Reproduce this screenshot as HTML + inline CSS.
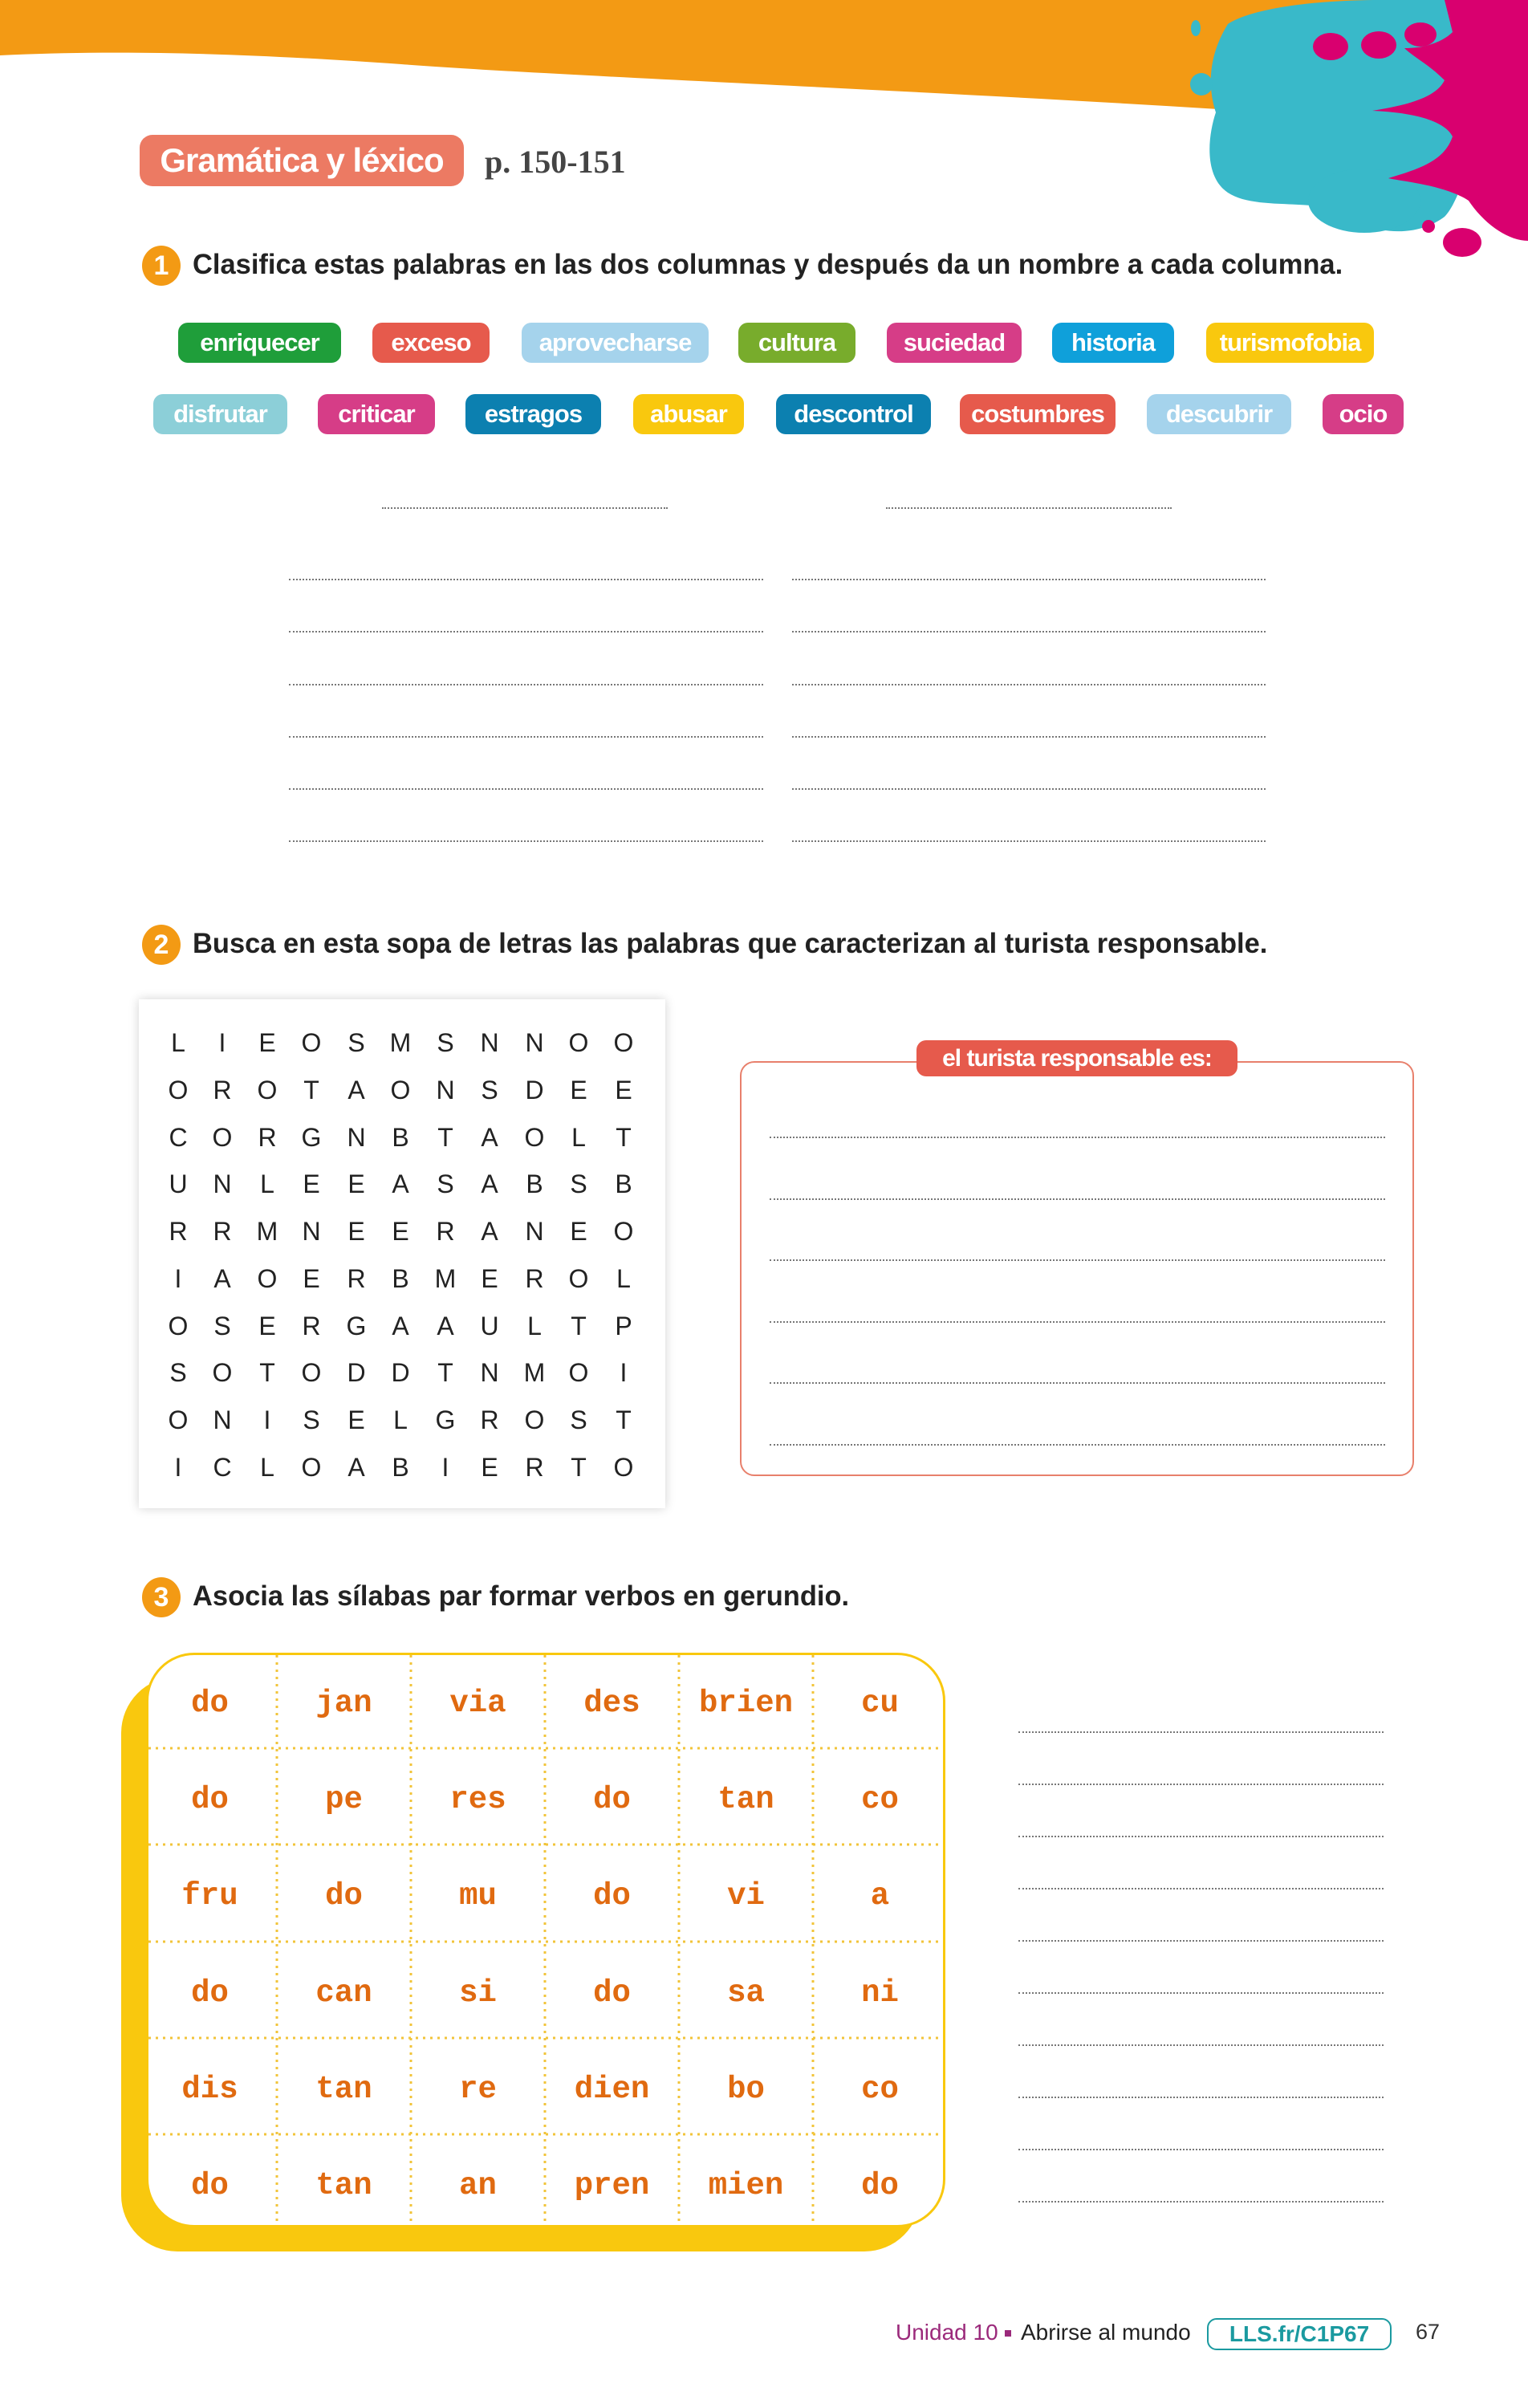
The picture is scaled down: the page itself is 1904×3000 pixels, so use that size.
<!DOCTYPE html>
<html><head><meta charset="utf-8"><style>
*{margin:0;padding:0;box-sizing:border-box}
body{width:1904px;height:3000px;position:relative;background:#fff;font-family:"Liberation Sans",sans-serif;overflow:hidden}
.a{position:absolute}
.pill{position:absolute;height:50px;border-radius:12px;color:#fff;font-weight:bold;font-size:31px;display:flex;align-items:center;justify-content:center;letter-spacing:-1px}
.num{position:absolute;width:48px;height:50px;border-radius:50%;background:#f39a14;color:#fff;font-weight:bold;font-size:34px;display:flex;align-items:center;justify-content:center}
.q{position:absolute;font-weight:bold;font-size:35px;color:#222;white-space:nowrap;transform-origin:left center;transform:scaleX(0.985)}
.dl{position:absolute;height:0;border-top:2px dotted #777}
.ws{position:absolute;font-size:32px;color:#222;width:40px;text-align:center}
.g{position:absolute;width:167px;text-align:center;font-family:"Liberation Mono",monospace;font-weight:bold;font-size:39px;color:#e06a10}
</style></head><body>
<svg class="a" style="left:0;top:0" width="1904" height="340" viewBox="0 0 1904 340">
<path d="M0,0 H1904 V140 L1518,136 C1100,110 700,95 500,80 C300,66 150,62 0,69 Z" fill="#f39a14"/>
<path d="M1530,30 C1560,10 1640,0 1720,0 L1820,0 L1830,110 C1850,160 1820,250 1800,270 C1760,300 1700,290 1660,260 C1620,250 1560,260 1530,240 C1500,220 1505,170 1515,140 C1505,110 1505,70 1530,30 Z" fill="#39b9c9"/>
<ellipse cx="1700" cy="250" rx="70" ry="40" fill="#39b9c9"/>
<ellipse cx="1497" cy="105" rx="14" ry="14" fill="#39b9c9"/>
<ellipse cx="1490" cy="35" rx="6" ry="10" fill="#39b9c9"/>
<path d="M1800,0 H1904 V300 C1880,300 1850,280 1830,250 C1800,230 1740,225 1730,222 C1770,210 1800,200 1810,170 C1800,150 1760,140 1710,138 C1760,130 1790,120 1800,100 C1780,80 1760,70 1750,60 C1780,60 1800,50 1810,40 Z" fill="#d9006f"/>
<ellipse cx="1658" cy="58" rx="22" ry="17" fill="#d9006f"/>
<ellipse cx="1718" cy="56" rx="22" ry="17" fill="#d9006f"/>
<ellipse cx="1770" cy="43" rx="20" ry="15" fill="#d9006f"/>
<ellipse cx="1822" cy="302" rx="24" ry="18" fill="#d9006f"/>
<ellipse cx="1856" cy="248" rx="14" ry="14" fill="#d9006f"/>
<ellipse cx="1780" cy="282" rx="8" ry="8" fill="#d9006f"/>
</svg>

<div class="a" style="left:174px;top:168px;width:404px;height:64px;border-radius:16px;background:#ec7a63;color:#fff;font-size:42px;font-weight:bold;display:flex;align-items:center;justify-content:center;letter-spacing:-1px">Gramática y léxico</div>
<div class="a" style="left:604px;top:178px;font-family:'Liberation Serif',serif;font-weight:bold;font-size:40px;color:#444">p. 150-151</div>

<div class="num" style="left:177px;top:306px">1</div>
<div class="q" style="left:240px;top:310px">Clasifica estas palabras en las dos columnas y después da un nombre a cada columna.</div>

<div class="pill" style="left:222px;top:402px;width:203px;background:#1f9e3a">enriquecer</div>
<div class="pill" style="left:464px;top:402px;width:146px;background:#e65a4c">exceso</div>
<div class="pill" style="left:650px;top:402px;width:233px;background:#a5d3ec">aprovecharse</div>
<div class="pill" style="left:920px;top:402px;width:146px;background:#78ac2c">cultura</div>
<div class="pill" style="left:1105px;top:402px;width:168px;background:#d63d87">suciedad</div>
<div class="pill" style="left:1311px;top:402px;width:152px;background:#0fa0da">historia</div>
<div class="pill" style="left:1503px;top:402px;width:209px;background:#f9c80e">turismofobia</div>

<div class="pill" style="left:191px;top:491px;width:167px;background:#8ccfd8">disfrutar</div>
<div class="pill" style="left:396px;top:491px;width:146px;background:#d63d87">criticar</div>
<div class="pill" style="left:580px;top:491px;width:169px;background:#0c80b0">estragos</div>
<div class="pill" style="left:789px;top:491px;width:138px;background:#f9c80e">abusar</div>
<div class="pill" style="left:967px;top:491px;width:193px;background:#0c80b0">descontrol</div>
<div class="pill" style="left:1196px;top:491px;width:194px;background:#e65a4c">costumbres</div>
<div class="pill" style="left:1429px;top:491px;width:180px;background:#a5d3ec">descubrir</div>
<div class="pill" style="left:1648px;top:491px;width:101px;background:#d63d87">ocio</div>

<div class="dl" style="left:476px;top:632px;width:356px"></div>
<div class="dl" style="left:1104px;top:632px;width:356px"></div>
<div class="dl" style="left:360px;top:721px;width:591px"></div><div class="dl" style="left:987px;top:721px;width:590px"></div>
<div class="dl" style="left:360px;top:786px;width:591px"></div><div class="dl" style="left:987px;top:786px;width:590px"></div>
<div class="dl" style="left:360px;top:852px;width:591px"></div><div class="dl" style="left:987px;top:852px;width:590px"></div>
<div class="dl" style="left:360px;top:917px;width:591px"></div><div class="dl" style="left:987px;top:917px;width:590px"></div>
<div class="dl" style="left:360px;top:982px;width:591px"></div><div class="dl" style="left:987px;top:982px;width:590px"></div>
<div class="dl" style="left:360px;top:1047px;width:591px"></div><div class="dl" style="left:987px;top:1047px;width:590px"></div>

<div class="num" style="left:177px;top:1152px">2</div>
<div class="q" style="left:240px;top:1156px">Busca en esta sopa de letras las palabras que caracterizan al turista responsable.</div>

<div class="a" style="left:173px;top:1245px;width:656px;height:634px;background:#fff;box-shadow:0 0 12px rgba(0,0,0,0.18)"></div>

<div class="a" style="left:922px;top:1322px;width:840px;height:517px;border:2px solid #e8806c;border-radius:18px"></div>
<div class="a" style="left:1142px;top:1296px;width:400px;height:45px;border-radius:12px;background:#e65a4c;color:#fff;font-weight:bold;font-size:30px;display:flex;align-items:center;justify-content:center;letter-spacing:-1px">el turista responsable es:</div>
<div class="dl" style="left:959px;top:1416px;width:767px"></div>
<div class="dl" style="left:959px;top:1493px;width:767px"></div>
<div class="dl" style="left:959px;top:1569px;width:767px"></div>
<div class="dl" style="left:959px;top:1646px;width:767px"></div>
<div class="dl" style="left:959px;top:1722px;width:767px"></div>
<div class="dl" style="left:959px;top:1799px;width:767px"></div>

<div class="num" style="left:177px;top:1965px">3</div>
<div class="q" style="left:240px;top:1969px">Asocia las sílabas par formar verbos en gerundio.</div>

<div class="a" style="left:151px;top:2089px;width:996px;height:716px;background:#f9c80e;border-radius:70px"></div>
<div class="a" style="left:182px;top:2059px;width:996px;height:716px;background:#fff;border:3px solid #f9c80e;border-radius:60px"></div>

<div class="dl" style="left:1269px;top:2157px;width:455px"></div>
<div class="dl" style="left:1269px;top:2222px;width:455px"></div>
<div class="dl" style="left:1269px;top:2287px;width:455px"></div>
<div class="dl" style="left:1269px;top:2352px;width:455px"></div>
<div class="dl" style="left:1269px;top:2417px;width:455px"></div>
<div class="dl" style="left:1269px;top:2482px;width:455px"></div>
<div class="dl" style="left:1269px;top:2547px;width:455px"></div>
<div class="dl" style="left:1269px;top:2612px;width:455px"></div>
<div class="dl" style="left:1269px;top:2677px;width:455px"></div>
<div class="dl" style="left:1269px;top:2742px;width:455px"></div>

<div class="a" style="left:1116px;top:2890px;font-size:28px;color:#9b2a7b">Unidad 10</div>
<div class="a" style="left:1252px;top:2903px;width:8px;height:8px;background:#9b2a7b"></div>
<div class="a" style="left:1272px;top:2890px;font-size:28px;color:#222">Abrirse al mundo</div>
<div class="a" style="left:1504px;top:2888px;width:230px;height:40px;border:2px solid #1b9aa0;border-radius:12px;color:#1b9aa0;font-weight:bold;font-size:28px;display:flex;align-items:center;justify-content:center">LLS.fr/C1P67</div>
<div class="a" style="left:1764px;top:2890px;font-size:27px;color:#333">67</div>

<div class="a" style="left:0;top:0">
<div style="position:absolute;left:0;top:0">
<div class="ws" style="left:202px;top:1281px">L</div><div class="ws" style="left:257px;top:1281px">I</div><div class="ws" style="left:313px;top:1281px">E</div><div class="ws" style="left:368px;top:1281px">O</div><div class="ws" style="left:424px;top:1281px">S</div><div class="ws" style="left:479px;top:1281px">M</div><div class="ws" style="left:535px;top:1281px">S</div><div class="ws" style="left:590px;top:1281px">N</div><div class="ws" style="left:646px;top:1281px">N</div><div class="ws" style="left:701px;top:1281px">O</div><div class="ws" style="left:757px;top:1281px">O</div>
<div class="ws" style="left:202px;top:1340px">O</div><div class="ws" style="left:257px;top:1340px">R</div><div class="ws" style="left:313px;top:1340px">O</div><div class="ws" style="left:368px;top:1340px">T</div><div class="ws" style="left:424px;top:1340px">A</div><div class="ws" style="left:479px;top:1340px">O</div><div class="ws" style="left:535px;top:1340px">N</div><div class="ws" style="left:590px;top:1340px">S</div><div class="ws" style="left:646px;top:1340px">D</div><div class="ws" style="left:701px;top:1340px">E</div><div class="ws" style="left:757px;top:1340px">E</div>
<div class="ws" style="left:202px;top:1399px">C</div><div class="ws" style="left:257px;top:1399px">O</div><div class="ws" style="left:313px;top:1399px">R</div><div class="ws" style="left:368px;top:1399px">G</div><div class="ws" style="left:424px;top:1399px">N</div><div class="ws" style="left:479px;top:1399px">B</div><div class="ws" style="left:535px;top:1399px">T</div><div class="ws" style="left:590px;top:1399px">A</div><div class="ws" style="left:646px;top:1399px">O</div><div class="ws" style="left:701px;top:1399px">L</div><div class="ws" style="left:757px;top:1399px">T</div>
<div class="ws" style="left:202px;top:1457px">U</div><div class="ws" style="left:257px;top:1457px">N</div><div class="ws" style="left:313px;top:1457px">L</div><div class="ws" style="left:368px;top:1457px">E</div><div class="ws" style="left:424px;top:1457px">E</div><div class="ws" style="left:479px;top:1457px">A</div><div class="ws" style="left:535px;top:1457px">S</div><div class="ws" style="left:590px;top:1457px">A</div><div class="ws" style="left:646px;top:1457px">B</div><div class="ws" style="left:701px;top:1457px">S</div><div class="ws" style="left:757px;top:1457px">B</div>
<div class="ws" style="left:202px;top:1516px">R</div><div class="ws" style="left:257px;top:1516px">R</div><div class="ws" style="left:313px;top:1516px">M</div><div class="ws" style="left:368px;top:1516px">N</div><div class="ws" style="left:424px;top:1516px">E</div><div class="ws" style="left:479px;top:1516px">E</div><div class="ws" style="left:535px;top:1516px">R</div><div class="ws" style="left:590px;top:1516px">A</div><div class="ws" style="left:646px;top:1516px">N</div><div class="ws" style="left:701px;top:1516px">E</div><div class="ws" style="left:757px;top:1516px">O</div>
<div class="ws" style="left:202px;top:1575px">I</div><div class="ws" style="left:257px;top:1575px">A</div><div class="ws" style="left:313px;top:1575px">O</div><div class="ws" style="left:368px;top:1575px">E</div><div class="ws" style="left:424px;top:1575px">R</div><div class="ws" style="left:479px;top:1575px">B</div><div class="ws" style="left:535px;top:1575px">M</div><div class="ws" style="left:590px;top:1575px">E</div><div class="ws" style="left:646px;top:1575px">R</div><div class="ws" style="left:701px;top:1575px">O</div><div class="ws" style="left:757px;top:1575px">L</div>
<div class="ws" style="left:202px;top:1634px">O</div><div class="ws" style="left:257px;top:1634px">S</div><div class="ws" style="left:313px;top:1634px">E</div><div class="ws" style="left:368px;top:1634px">R</div><div class="ws" style="left:424px;top:1634px">G</div><div class="ws" style="left:479px;top:1634px">A</div><div class="ws" style="left:535px;top:1634px">A</div><div class="ws" style="left:590px;top:1634px">U</div><div class="ws" style="left:646px;top:1634px">L</div><div class="ws" style="left:701px;top:1634px">T</div><div class="ws" style="left:757px;top:1634px">P</div>
<div class="ws" style="left:202px;top:1692px">S</div><div class="ws" style="left:257px;top:1692px">O</div><div class="ws" style="left:313px;top:1692px">T</div><div class="ws" style="left:368px;top:1692px">O</div><div class="ws" style="left:424px;top:1692px">D</div><div class="ws" style="left:479px;top:1692px">D</div><div class="ws" style="left:535px;top:1692px">T</div><div class="ws" style="left:590px;top:1692px">N</div><div class="ws" style="left:646px;top:1692px">M</div><div class="ws" style="left:701px;top:1692px">O</div><div class="ws" style="left:757px;top:1692px">I</div>
<div class="ws" style="left:202px;top:1751px">O</div><div class="ws" style="left:257px;top:1751px">N</div><div class="ws" style="left:313px;top:1751px">I</div><div class="ws" style="left:368px;top:1751px">S</div><div class="ws" style="left:424px;top:1751px">E</div><div class="ws" style="left:479px;top:1751px">L</div><div class="ws" style="left:535px;top:1751px">G</div><div class="ws" style="left:590px;top:1751px">R</div><div class="ws" style="left:646px;top:1751px">O</div><div class="ws" style="left:701px;top:1751px">S</div><div class="ws" style="left:757px;top:1751px">T</div>
<div class="ws" style="left:202px;top:1810px">I</div><div class="ws" style="left:257px;top:1810px">C</div><div class="ws" style="left:313px;top:1810px">L</div><div class="ws" style="left:368px;top:1810px">O</div><div class="ws" style="left:424px;top:1810px">A</div><div class="ws" style="left:479px;top:1810px">B</div><div class="ws" style="left:535px;top:1810px">I</div><div class="ws" style="left:590px;top:1810px">E</div><div class="ws" style="left:646px;top:1810px">R</div><div class="ws" style="left:701px;top:1810px">T</div><div class="ws" style="left:757px;top:1810px">O</div>
</div>

<svg style="position:absolute;left:0;top:0" width="1904" height="3000">
<g stroke="#f2c43a" stroke-width="3" stroke-dasharray="3 6">
<line x1="345" y1="2062" x2="345" y2="2772"/><line x1="512" y1="2062" x2="512" y2="2772"/><line x1="679" y1="2062" x2="679" y2="2772"/><line x1="846" y1="2062" x2="846" y2="2772"/><line x1="1013" y1="2062" x2="1013" y2="2772"/>
<line x1="185" y1="2178" x2="1175" y2="2178"/><line x1="185" y1="2298" x2="1175" y2="2298"/><line x1="185" y1="2419" x2="1175" y2="2419"/><line x1="185" y1="2539" x2="1175" y2="2539"/><line x1="185" y1="2659" x2="1175" y2="2659"/>
</g></svg>

<div class="g" style="left:178px;top:2100px">do</div><div class="g" style="left:345px;top:2100px">jan</div><div class="g" style="left:512px;top:2100px">via</div><div class="g" style="left:679px;top:2100px">des</div><div class="g" style="left:846px;top:2100px">brien</div><div class="g" style="left:1013px;top:2100px">cu</div>
<div class="g" style="left:178px;top:2220px">do</div><div class="g" style="left:345px;top:2220px">pe</div><div class="g" style="left:512px;top:2220px">res</div><div class="g" style="left:679px;top:2220px">do</div><div class="g" style="left:846px;top:2220px">tan</div><div class="g" style="left:1013px;top:2220px">co</div>
<div class="g" style="left:178px;top:2340px">fru</div><div class="g" style="left:345px;top:2340px">do</div><div class="g" style="left:512px;top:2340px">mu</div><div class="g" style="left:679px;top:2340px">do</div><div class="g" style="left:846px;top:2340px">vi</div><div class="g" style="left:1013px;top:2340px">a</div>
<div class="g" style="left:178px;top:2461px">do</div><div class="g" style="left:345px;top:2461px">can</div><div class="g" style="left:512px;top:2461px">si</div><div class="g" style="left:679px;top:2461px">do</div><div class="g" style="left:846px;top:2461px">sa</div><div class="g" style="left:1013px;top:2461px">ni</div>
<div class="g" style="left:178px;top:2581px">dis</div><div class="g" style="left:345px;top:2581px">tan</div><div class="g" style="left:512px;top:2581px">re</div><div class="g" style="left:679px;top:2581px">dien</div><div class="g" style="left:846px;top:2581px">bo</div><div class="g" style="left:1013px;top:2581px">co</div>
<div class="g" style="left:178px;top:2701px">do</div><div class="g" style="left:345px;top:2701px">tan</div><div class="g" style="left:512px;top:2701px">an</div><div class="g" style="left:679px;top:2701px">pren</div><div class="g" style="left:846px;top:2701px">mien</div><div class="g" style="left:1013px;top:2701px">do</div>
</div>
</body></html>
